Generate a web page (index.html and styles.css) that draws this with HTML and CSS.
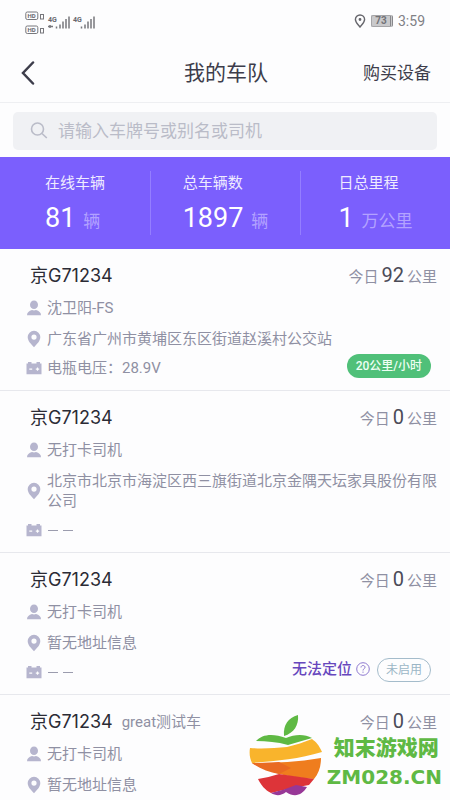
FILE: index.html
```html
<!DOCTYPE html>
<html lang="zh-CN">
<head>
<meta charset="utf-8">
<meta name="viewport" content="width=device-width, initial-scale=1">
<title>我的车队</title>
<link rel="stylesheet" href="styles.css">
</head>
<body>
<svg class="sprite" aria-hidden="true">
  <symbol id="person" viewBox="0 0 16 16"><ellipse cx="8" cy="4.800" rx="4" ry="4.300"/><path d="M1 15.300c0-3 2-4.300 5-5.300l2 .6 2-.6c3 1 5 2.300 5 5.300z"/></symbol>
  <symbol id="pin" viewBox="0 0 16 18"><path fill-rule="evenodd" d="M8 .8a6.300 6.300 0 0 1 6.300 6.300c0 4-3.300 7-6.300 10.100C5 14.100 1.700 11.100 1.700 7.100A6.300 6.300 0 0 1 8 .8zm0 3.700a2.600 2.600 0 1 0 0 5.200 2.600 2.600 0 0 0 0-5.200z"/></symbol>
  <symbol id="battery" viewBox="0 0 16 14"><path fill-rule="evenodd" d="M2 2.500V1h3.500v1.500h5V1H14v1.500h1.500v10.700H.5V2.500zm1.300 5v1.200h2.900V7.500zm6.500 0v1.200h1.100v1.100h1.200V8.700h1.100V7.500h-1.100V6.400h-1.200v1.100z"/></symbol>
</svg>
<main class="app">
  <div class="status">
    <svg class="signals" width="72" height="26" viewBox="0 0 72 26">
      <g fill="none" stroke="#77777c"><rect x=".8" y="2" width="12" height="7.500" rx="1.500"/><rect x=".8" y="16" width="12" height="7.500" rx="1.500"/><rect x="15.500" y="4.500" width="3" height="4.500"/><rect x="15.500" y="18.500" width="3" height="4.500"/></g>
      <g class="tiny"><text x="2.500" y="8">HD</text><text x="2.500" y="22">HD</text></g>
      <g class="tiny network"><text x="23" y="12">4G</text><text x="48" y="12">4G</text></g>
      <path d="M23 16.500h5M25 15v3M31.500 16.500v2M35 14.500v4M38 11.500v7M41 9v9.500M44 6.500v12M56.500 16.500v2M60 14.500v4M63 11.500v7M66 9v9.500M69 6.500v12" stroke="#77777c" stroke-width="1.500" fill="none"/>
    </svg>
    <div class="status-right">
      <svg width="12" height="14" viewBox="0 0 12 14" fill="none" stroke="#66666c" stroke-width="1.400"><path d="M6 1a4.600 4.600 0 0 1 4.600 4.600C10.600 8.500 8 10.500 6 13 4 10.500 1.400 8.500 1.400 5.600A4.600 4.600 0 0 1 6 1z"/><circle cx="6" cy="5.500" r=".7"/></svg>
      <span class="charge">73</span>
      <span>3:59</span>
    </div>
  </div>
  <header class="bar">
    <button class="back" type="button" aria-label="返回"><svg width="14" height="24" viewBox="0 0 14 24" fill="none" stroke="#3d3d4b" stroke-width="2.500" stroke-linecap="round"><path d="M12 1.500 2 12l10 10.500"/></svg></button>
    <h1>我的车队</h1>
    <a class="buy" href="#buy">购买设备</a>
  </header>
  <label class="search">
    <svg width="18" height="18" viewBox="0 0 18 18" fill="none" stroke="#babcc8" stroke-width="1.600"><circle cx="7.500" cy="7" r="6"/><path d="m12 11.500 4.800 4.500"/></svg>
    <input type="search" aria-label="搜索" placeholder="请输入车牌号或别名或司机">
  </label>
  <section class="stats">
    <div class="stat"><div><p>在线车辆</p><p class="figure">81<small>辆</small></p></div></div>
    <div class="stat"><div><p>总车辆数</p><p class="figure">1897<small>辆</small></p></div></div>
    <div class="stat"><div><p>日总里程</p><p class="figure">1<small>万公里</small></p></div></div>
  </section>
  <section class="fleet">
    <article class="card">
      <div class="head"><h2>京G71234</h2><p class="today">今日<b>92</b>公里</p></div>
      <p class="line"><svg><use href="#person"/></svg>沈卫阳-FS</p>
      <p class="line"><svg class="pin"><use href="#pin"/></svg>广东省广州市黄埔区东区街道赵溪村公交站</p>
      <div class="foot"><p class="line"><svg><use href="#battery"/></svg>电瓶电压：28.9V</p><span class="pill">20公里/小时</span></div>
    </article>
    <article class="card">
      <div class="head"><h2>京G71234</h2><p class="today">今日<b>0</b>公里</p></div>
      <p class="line"><svg><use href="#person"/></svg>无打卡司机</p>
      <p class="line"><svg class="pin"><use href="#pin"/></svg>北京市北京市海淀区西三旗街道北京金隅天坛家具股份有限公司</p>
      <div class="foot"><p class="line"><svg><use href="#battery"/></svg><span class="dashes"><i></i><i></i></span></p></div>
    </article>
    <article class="card">
      <div class="head"><h2>京G71234</h2><p class="today">今日<b>0</b>公里</p></div>
      <p class="line"><svg><use href="#person"/></svg>无打卡司机</p>
      <p class="line"><svg class="pin"><use href="#pin"/></svg>暂无地址信息</p>
      <div class="foot"><p class="line"><svg><use href="#battery"/></svg><span class="dashes"><i></i><i></i></span></p>
        <button class="locate" type="button">无法定位<svg width="14" height="14" viewBox="0 0 14 14" fill="none" stroke="#8d78cf"><circle cx="7" cy="7" r="6.300"/><path d="M5 5.500c0-2.600 4-2.600 4-.2C9 6.800 7 6.700 7 8.500M7 9.600v1.200"/></svg></button>
        <span class="pill off">未启用</span></div>
    </article>
    <article class="card">
      <div class="head"><h2>京G71234</h2><span class="alias">great测试车</span><p class="today">今日<b>0</b>公里</p></div>
      <p class="line"><svg><use href="#person"/></svg>无打卡司机</p>
      <p class="line"><svg class="pin"><use href="#pin"/></svg>暂无地址信息</p>
    </article>
  </section>
  <aside class="brand">
    <svg width="74" height="84" viewBox="0 0 74 84">
      <path fill="#5fb944" d="M35 22C34 11 39 4 49 1c1 10-4 18-14 21z"/>
      <path fill="#5fb944" d="M7 27c6-7 17-8 30-3 9-4 19-4 26 0L39 31c-11-3-21-4-32-4z"/>
      <path fill="#f9b42c" d="M1 34c13 1 25 0 37-1 9-2 17-5 25-8 4 3 7 6 10 13-23 7-46 9-70 11-2-4-3-9-2-15z"/>
      <path fill="#ef7d1e" d="M3 49c23 0 46-1 69-5 0 8-2 15-7 21C45 64 22 60 3 49z"/>
      <path fill="#e96a22" d="M3 49c9 0 18 0 27-1l12 6-12 6C20 58 11 55 3 49z"/>
      <path fill="#dd3439" d="M9 65c7-1 14-3 21-5l35 5-5 6c-13 2-26 5-38 8C16 76 12 71 9 65z"/>
      <path fill="#973797" d="M22 79c9-2 17-5 25-8l11 2c-5 8-12 11-21 5-5 4-10 4-15 1z"/>
    </svg>
    <div><strong>知末游戏网</strong><span>ZM028.CN</span></div>
  </aside>
</main>
</body>
</html>
```
FILE: styles.css
```css
* { box-sizing: border-box; }
body, h1, h2, p { margin: 0; font-weight: 400; }
body {
  background: #fdfdfe;
  color: #8f90a3;
  font: 15px/20px Roboto, "Noto Sans CJK SC", sans-serif;
}
button { padding: 0; border: 0; background: none; font: inherit; color: inherit; }
.sprite { position: absolute; width: 0; height: 0; }
.app { position: relative; min-height: 100vh; }

.status {
  display: flex;
  justify-content: space-between;
  height: 44px;
  padding: 10px 25px 0;
  color: #808085;
}
.tiny { font: 700 6px Roboto, sans-serif; fill: #68686e; }
.network { font-size: 7px; }
.status-right { display: flex; align-items: center; gap: 5px; height: 22px; font-size: 14px; }
.charge {
  width: 22px;
  height: 12px;
  border: 1px solid #a5a5a8;
  border-right: 3px double #88888c;
  border-radius: 2px;
  background: #c9c9cb;
  color: #727277;
  font-size: 10px;
  font-weight: 700;
  line-height: 10px;
  text-align: center;
}

.bar {
  display: grid;
  grid-template-columns: 1fr auto 1fr;
  align-items: center;
  height: 59px;
  padding: 0 19px 0 21px;
  border-bottom: 1px solid #eeeff2;
  color: #3d3d4b;
}
.back { display: flex; width: 24px; }
.bar h1 { font-size: 21px; line-height: 30px; }
.buy { justify-self: end; color: inherit; font-size: 17px; text-decoration: none; }

.search {
  display: flex;
  align-items: center;
  gap: 10px;
  height: 38px;
  margin: 9px 13px 7px;
  padding: 0 17px;
  border-radius: 5px;
  background: #f0f1f4;
}
.search input {
  flex: 1;
  min-width: 0;
  padding: 0;
  border: 0;
  outline: 0;
  background: none;
  font: inherit;
  font-size: 17px;
}
.search input::placeholder { color: #babcc8; }

.stats {
  display: grid;
  grid-template-columns: repeat(3, 1fr);
  padding: 14px 0;
  background: #7b5ffd;
  color: #efebff;
}
.stat { display: flex; justify-content: center; height: 64px; padding-top: 2px; }
.stat + .stat { border-left: 1px solid #947eff; }
.figure { margin-top: 10px; color: #fff; font-size: 27px; line-height: 30px; white-space: nowrap; }
.figure small { margin-left: 8px; color: #b3a2ff; font-size: 17px; }

.card { padding: 12px 13px 12px 26px; border-bottom: 1px solid #e7e8ed; }
.card:last-child { padding-bottom: 0; border: 0; }
.head { display: flex; align-items: center; height: 30px; margin-bottom: 7px; padding-left: 4px; }
.head h2 { color: #2b2b35; font: 18px/24px Inter, "Noto Sans CJK SC", sans-serif; }
.alias { margin-left: 9px; }
.today { margin-left: auto; }
.today b { margin: 0 3px; color: #4b4b58; font-size: 20px; font-weight: 400; }
.line { display: flex; align-items: center; gap: 5px; min-height: 20px; }
.line + .line { margin-top: 11px; }
.line svg { flex: none; width: 16px; height: 16px; fill: #b6b5ce; }
.line .pin { height: 18px; }
.dashes { display: flex; gap: 5px; padding-left: 1px; }
.dashes i { width: 10px; height: 1px; background: #9b9cae; }
.foot { display: flex; align-items: flex-end; height: 20px; margin-top: 9px; padding-right: 6px; }
.foot .line { margin-right: auto; }
.pill {
  padding: 0 9px;
  border-radius: 12px;
  background: #50c079;
  color: #eefff4;
  font-size: 12px;
  font-weight: 500;
  line-height: 24px;
}
.pill.off {
  padding: 0 8px;
  border: 1px solid #a4bccb;
  background: none;
  color: #9bb6c6;
  font-weight: 400;
  line-height: 22px;
}
.locate { display: flex; align-items: center; gap: 4px; margin: 0 7px 3px 0; color: #6747bd; font-weight: 500; }

.brand {
  position: absolute;
  right: 8px;
  bottom: 2px;
  display: flex;
  gap: 4px;
  color: #5fb944;
}
.brand div { padding-top: 20px; }
.brand strong, .brand span { display: block; white-space: nowrap; }
.brand strong { padding-left: 7px; font: 900 21px/24px "Noto Sans CJK SC", sans-serif; }
.brand span { margin-top: 7px; font: 700 20px/24px "DejaVu Sans", sans-serif; }
```
